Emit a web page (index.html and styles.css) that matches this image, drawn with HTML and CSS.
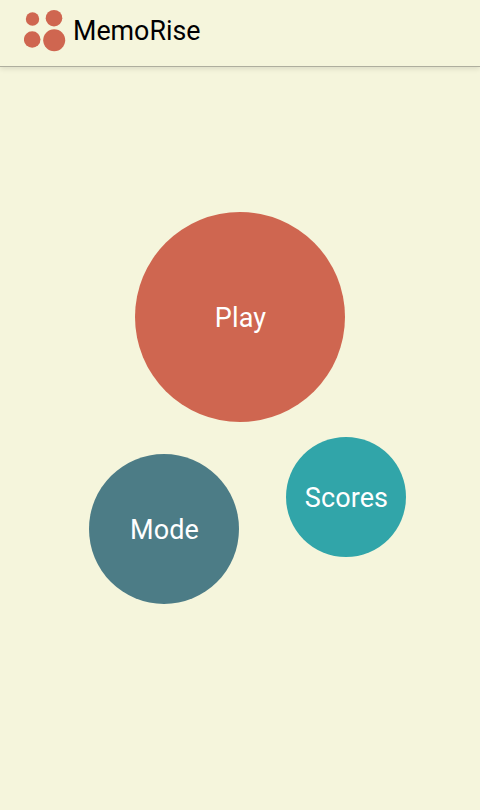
FILE: index.html
```html
<!DOCTYPE html>
<html lang="en">
<head>
  <meta charset="UTF-8" />
  <meta name="viewport" content="width=device-width, initial-scale=1.0" />
  <title>MemoRise</title>
  <link rel="stylesheet" href="styles.css">
</head>
<body>
  <header class="action-bar">
    <svg class="logo" width="48" height="48" viewBox="0 0 48 48" aria-hidden="true">
      <circle cx="8.5" cy="10" r="6.7" />
      <circle cx="30" cy="9.2" r="8.3" />
      <circle cx="8.2" cy="30.5" r="8.3" />
      <circle cx="30.2" cy="31.3" r="11" />
    </svg>
    <h1 class="title">MemoRise</h1>
  </header>

  <main class="menu">
    <div class="bubble play">Play</div>
    <div class="bubble mode">Mode</div>
    <div class="bubble scores">Scores</div>
  </main>
</body>
</html>
```

FILE: styles.css
```css
* {
  box-sizing: border-box;
}

html,
body {
  height: 100%;
}

body {
  font-family: Roboto, Arial, sans-serif;
  background-color: #f5f5dc;
  margin: 0;
  padding: 0;
  display: flex;
  flex-direction: column;
  overflow: hidden;
}

.action-bar {
  height: 67px;
  flex-shrink: 0;
  display: flex;
  align-items: center;
  padding-left: 24px;
  border-bottom: 1px solid #aeae9e;
  box-shadow: 0 2px 5px rgba(0, 0, 0, 0.1);
}

.logo {
  fill: #cf6650;
  margin-right: 1px;
}

.title {
  margin: 0 0 4px;
  font-size: 26.8px;
  font-weight: 400;
  color: #000;
}

.menu {
  position: relative;
  flex: 1;
}

.bubble {
  position: absolute;
  display: flex;
  align-items: center;
  justify-content: center;
  padding: 2px 0 0 1px;
  border-radius: 50%;
  color: #fff;
  font-size: 27px;
  letter-spacing: 0.1px;
}

.play {
  left: 135px;
  top: 145px;
  width: 210px;
  height: 210px;
  background-color: #cf6650;
}

.mode {
  left: 89px;
  top: 387px;
  width: 150px;
  height: 150px;
  background-color: #4c7c86;
}

.scores {
  left: 286px;
  top: 370px;
  width: 120px;
  height: 120px;
  background-color: #31a5a9;
}
```
